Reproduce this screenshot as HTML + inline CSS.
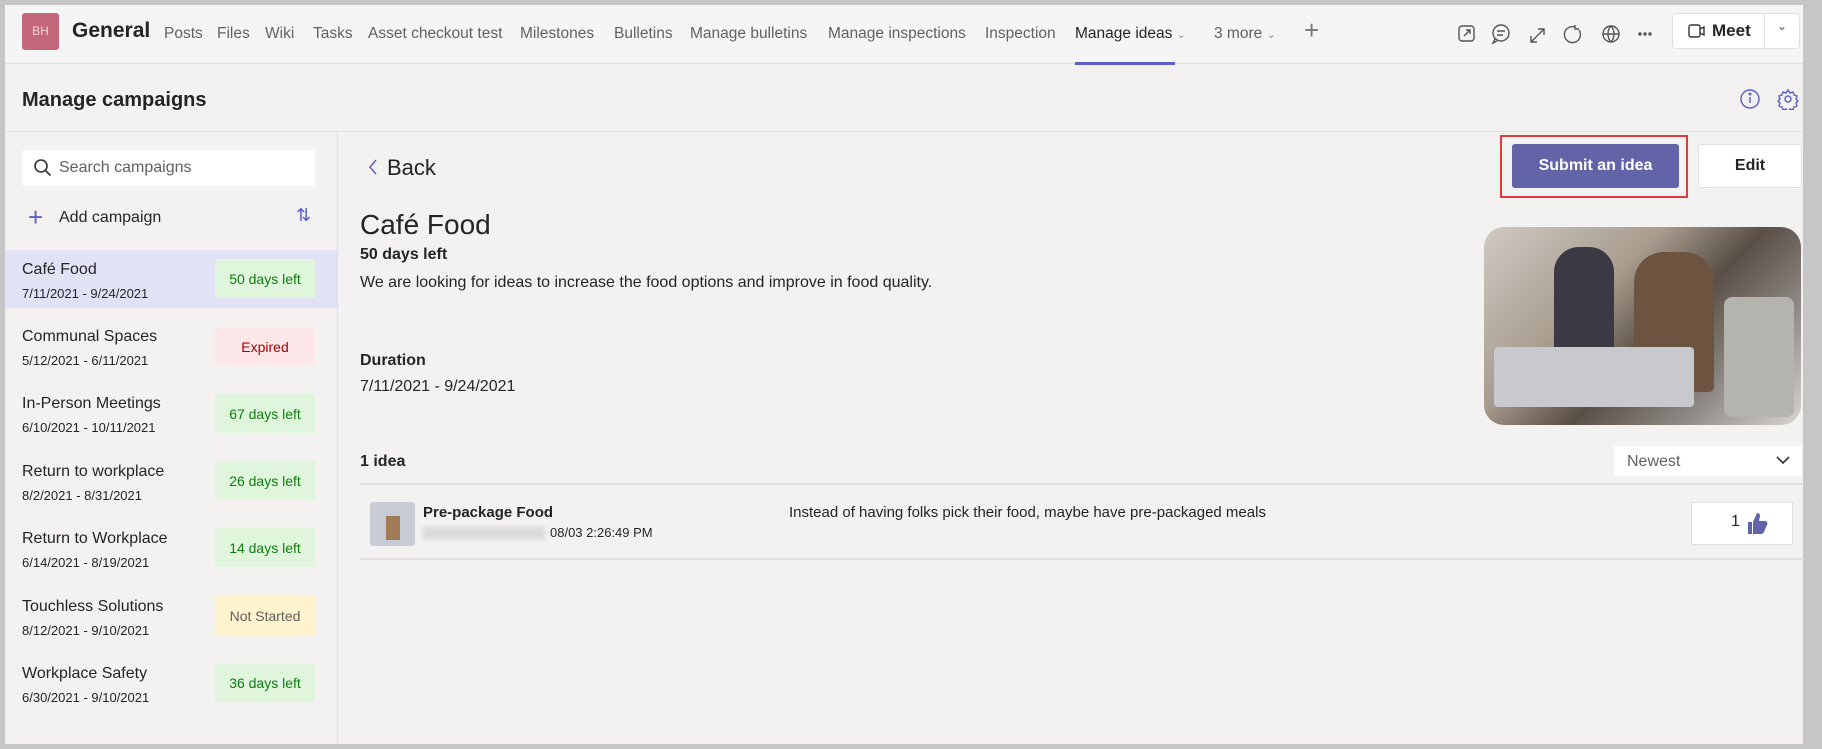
<!DOCTYPE html>
<html><head><meta charset="utf-8"><style>
*{box-sizing:border-box;margin:0;padding:0}
body{width:1822px;height:749px;background:#c6c6c6;font-family:"Liberation Sans",sans-serif;color:#242424;position:relative;overflow:hidden}
.frame{position:absolute;left:5px;top:5px;width:1798px;height:739px;background:#f3f2f1}
.a{position:absolute;white-space:nowrap}
.top{position:absolute;left:0;top:0;width:1798px;height:59px;background:#f5f5f5;border-bottom:1px solid #e1dfdd}
.tab{position:absolute;top:20px;font-size:15.5px;color:#616161}
.badge{position:absolute;left:210px;width:100px;height:39px;font-size:14px;display:flex;align-items:center;justify-content:center}
.g{background:#dff6dd;color:#107c10}
.r{background:#fde7e9;color:#a80000}
.y{background:#fff4ce;color:#605e5c}
.it{position:absolute;left:0;width:332px;height:58px}
.it .t{position:absolute;left:17px;top:11px;font-size:16px}
.it .d{position:absolute;left:17px;top:36px;font-size:13px}
</style></head><body>
<div class="frame">
<div class="top">
 <div class="a" style="left:17px;top:8px;width:37px;height:37px;background:#c4677a;border-radius:3px;color:#f3d5da;font-size:12px;text-align:center;line-height:37px">BH</div>
 <div class="a" style="left:67px;top:14px;font-size:21px;font-weight:bold">General</div>
 <div class="tab" style="left:159px">Posts</div>
 <div class="tab" style="left:212px">Files</div>
 <div class="tab" style="left:260px">Wiki</div>
 <div class="tab" style="left:308px">Tasks</div>
 <div class="tab" style="left:363px">Asset checkout test</div>
 <div class="tab" style="left:515px">Milestones</div>
 <div class="tab" style="left:609px">Bulletins</div>
 <div class="tab" style="left:685px">Manage bulletins</div>
 <div class="tab" style="left:823px">Manage inspections</div>
 <div class="tab" style="left:980px">Inspection</div>
 <div class="tab" style="left:1070px;color:#242424">Manage ideas <span style="font-size:11px;color:#888">&#8964;</span></div>
 <div class="a" style="left:1070px;top:57px;width:100px;height:3px;background:#5b5fc7"></div>
 <div class="tab" style="left:1209px">3 more <span style="font-size:11px;color:#888">&#8964;</span></div>
 <div class="a" style="left:1299px;top:10px;font-size:26px;color:#777;font-weight:300">+</div>
 <svg class="a" style="left:1452px;top:17px" width="200" height="26" viewBox="0 0 200 26" fill="none" stroke="#555" stroke-width="1.4">
  <rect x="2" y="4" width="15" height="15" rx="3"/><path d="M7 14l6-6M9 8h4v4"/>
  <circle cx="44" cy="11" r="8"/><path d="M40 9h8M40 13h6M38 17l-2 4 4-2"/>
  <path d="M74 20l13-13M74 14v6h6M81 7h6v6"/>
  <path d="M118 5a8 8 0 1 0 4 3M118 3v4h4"/>
  <circle cx="154" cy="12" r="8"/><path d="M146 12h16M154 4c-4 4-4 12 0 16c4-4 4-12 0-16"/>
  <circle cx="183" cy="12" r="1" fill="#555"/><circle cx="188" cy="12" r="1" fill="#555"/><circle cx="193" cy="12" r="1" fill="#555"/>
 </svg>
 <div class="a" style="left:1667px;top:8px;width:128px;height:36px;background:#fff;border:1px solid #e1dfdd;border-radius:4px"></div>
 <div class="a" style="left:1759px;top:9px;width:1px;height:34px;background:#e1dfdd"></div>
 <svg class="a" style="left:1683px;top:18px" width="18" height="16" fill="none" stroke="#333" stroke-width="1.4"><rect x="1" y="2" width="11" height="12" rx="2"/><path d="M12 6l4-2v8l-4-2"/></svg>
 <div class="a" style="left:1707px;top:16px;font-size:17px;font-weight:bold">Meet</div>
 <div class="a" style="left:1772px;top:14px;font-size:12px;color:#555">&#8964;</div>
</div>
<div class="a" style="left:17px;top:84px;font-size:20px;font-weight:bold">Manage campaigns</div>
<svg class="a" style="left:1735px;top:83px" width="60" height="22" fill="none" stroke="#5b5fc7" stroke-width="1.4"><circle cx="10" cy="11" r="9"/><path d="M10 9v6"/><circle cx="10" cy="6" r=".8" fill="#5b5fc7"/><circle cx="48" cy="11" r="3"/><path d="M48 2l2 3 3-1 1 3 3 1-1 3 2 2-2 2 1 3-3 1-1 3-3-1-2 3-2-3-3 1-1-3-3-1 1-3-2-2 2-2-1-3 3-1 1-3 3 1z"/></svg>
<div class="a" style="left:0;top:126px;width:1798px;height:1px;background:#e1dfdd"></div>
<div class="a" style="left:332px;top:127px;width:1px;height:612px;background:#e1dfdd"></div>
<div class="a" style="left:17px;top:145px;width:293px;height:36px;background:#fff;border-radius:3px"></div>
<svg class="a" style="left:28px;top:153px" width="20" height="20" fill="none" stroke="#333" stroke-width="1.6"><circle cx="8" cy="8" r="6"/><path d="M12.5 12.5l5 5"/></svg>
<div class="a" style="left:54px;top:154px;font-size:16px;color:#616161">Search campaigns</div>
<div class="a" style="left:23px;top:199px;font-size:26px;color:#5b5fc7;font-weight:300;line-height:26px">+</div>
<div class="a" style="left:54px;top:204px;font-size:16px">Add campaign</div>
<div class="a" style="left:291px;top:200px;font-size:18px;color:#5b5fc7">&#8645;</div>

<div class="it" style="top:245px;background:#e2e2f6"><div class="t">Café Food</div><div class="d">7/11/2021 - 9/24/2021</div></div>
<div class="badge g" style="top:254px">50 days left</div>
<div class="it" style="top:312px"><div class="t">Communal Spaces</div><div class="d">5/12/2021 - 6/11/2021</div></div>
<div class="badge r" style="top:322px">Expired</div>
<div class="it" style="top:379px"><div class="t">In-Person Meetings</div><div class="d">6/10/2021 - 10/11/2021</div></div>
<div class="badge g" style="top:389px">67 days left</div>
<div class="it" style="top:447px"><div class="t">Return to workplace</div><div class="d">8/2/2021 - 8/31/2021</div></div>
<div class="badge g" style="top:456px">26 days left</div>
<div class="it" style="top:514px"><div class="t">Return to Workplace</div><div class="d">6/14/2021 - 8/19/2021</div></div>
<div class="badge g" style="top:523px">14 days left</div>
<div class="it" style="top:582px"><div class="t">Touchless Solutions</div><div class="d">8/12/2021 - 9/10/2021</div></div>
<div class="badge y" style="top:591px">Not Started</div>
<div class="it" style="top:649px"><div class="t">Workplace Safety</div><div class="d">6/30/2021 - 9/10/2021</div></div>
<div class="badge g" style="top:658px">36 days left</div>

<svg class="a" style="left:362px;top:152px" width="12" height="20" fill="none" stroke="#5b5fc7" stroke-width="1.5"><path d="M9 3l-6 7 6 7"/></svg>
<div class="a" style="left:382px;top:150px;font-size:22px">Back</div>
<div class="a" style="left:1495px;top:130px;width:188px;height:63px;border:2px solid #e0393e"></div>
<div class="a" style="left:1507px;top:139px;width:167px;height:44px;background:#6264a7;border-radius:3px;color:#fff;font-size:16px;font-weight:bold;text-align:center;line-height:44px">Submit an idea</div>
<div class="a" style="left:1693px;top:139px;width:104px;height:44px;background:#fff;border:1px solid #e1dfdd;border-radius:3px;font-size:16px;font-weight:bold;text-align:center;line-height:42px">Edit</div>
<div class="a" style="left:355px;top:204px;font-size:28px">Café Food</div>
<div class="a" style="left:355px;top:241px;font-size:16px;font-weight:bold">50 days left</div>
<div class="a" style="left:355px;top:269px;font-size:16px">We are looking for ideas to increase the food options and improve in food quality.</div>
<div class="a" style="left:355px;top:347px;font-size:16px;font-weight:bold">Duration</div>
<div class="a" style="left:355px;top:373px;font-size:16px">7/11/2021 - 9/24/2021</div>
<div class="a" style="left:1479px;top:222px;width:317px;height:198px;border-radius:20px;overflow:hidden;background:linear-gradient(135deg,#cfcac3 0%,#a89c8e 35%,#5a4f46 55%,#8a8580 75%,#d8d4ce 100%)">
 <div class="a" style="left:70px;top:20px;width:60px;height:120px;background:#3b3a44;border-radius:25px 25px 5px 5px"></div>
 <div class="a" style="left:150px;top:25px;width:80px;height:140px;background:#6d5440;border-radius:30px 30px 5px 5px"></div>
 <div class="a" style="left:10px;top:120px;width:200px;height:60px;background:#c8c9cc;border-radius:4px"></div>
 <div class="a" style="left:240px;top:70px;width:70px;height:120px;background:#b5b3ae;border-radius:8px"></div>
</div>
<div class="a" style="left:355px;top:448px;font-size:16px;font-weight:bold">1 idea</div>
<div class="a" style="left:1609px;top:441px;width:188px;height:30px;background:#fff"></div>
<div class="a" style="left:1622px;top:448px;font-size:16px;color:#616161">Newest</div>
<svg class="a" style="left:1770px;top:449px" width="16" height="12" fill="none" stroke="#333" stroke-width="1.6"><path d="M2 3l6 6 6-6"/></svg>
<div class="a" style="left:355px;top:478px;width:1442px;height:2px;background:#e1dfdd"></div>
<div class="a" style="left:365px;top:497px;width:45px;height:44px;background:#c9cbd6;border-radius:3px"><div class="a" style="left:16px;top:14px;width:14px;height:24px;background:#a07b55"></div></div>
<div class="a" style="left:418px;top:499px;font-size:15px;font-weight:bold">Pre-package Food</div>
<div class="a" style="left:418px;top:522px;width:122px;height:12px;background:#dcdad8;filter:blur(2px)"></div>
<div class="a" style="left:545px;top:520px;font-size:13px">08/03 2:26:49 PM</div>
<div class="a" style="left:784px;top:499px;font-size:15px">Instead of having folks pick their food, maybe have pre-packaged meals</div>
<div class="a" style="left:1686px;top:497px;width:102px;height:43px;background:#fff;border:1px solid #e1dfdd"></div>
<div class="a" style="left:1726px;top:508px;font-size:16px">1</div>
<svg class="a" style="left:1741px;top:505px" width="22" height="26" viewBox="0 0 22 26"><path d="M2 12h4v12H2zM7 12l4-9c2 0 3 1 3 3l-1 5h6c2 0 3 2 2 4l-3 7c-1 2-2 2-4 2H7z" fill="#6264a7"/></svg>
<div class="a" style="left:355px;top:553px;width:1442px;height:2px;background:#e1dfdd"></div>
</div>
</body></html>
